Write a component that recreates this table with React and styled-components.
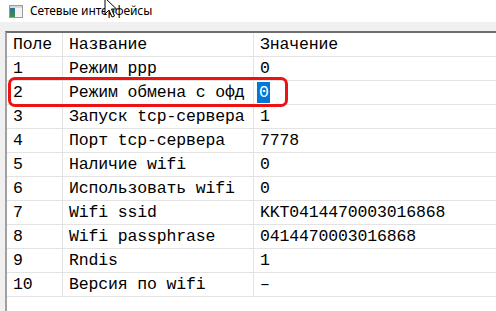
import React from "react";
import styled, { createGlobalStyle } from "styled-components";

const Global = createGlobalStyle`
  html, body { margin: 0; padding: 0; background: #f0f0f0; }
  body { width: 496px; height: 311px; overflow: hidden; }
`;

const Window = styled.div`
  position: relative;
  width: 496px;
  height: 311px;
  background: #f0f0f0;
  display: flex;
  flex-direction: column;
  overflow: hidden;
`;

const TitleBar = styled.div`
  height: 22px;
  background: #ffffff;
  display: flex;
  align-items: center;
  gap: 7px;
  padding-left: 9px;
  font-family: "Noto Sans", "Open Sans", sans-serif;
  font-size: 12px;
  color: #000;
  flex-shrink: 0;
`;

const Caption = styled.span`
  line-height: 22px;
  letter-spacing: -0.1px;
`;

const Body = styled.div`
  flex: 1;
  padding: 9px 0 0 5px;
  display: flex;
`;

const Panel = styled.div`
  flex: 1;
  background: #ffffff;
  border-top: 2px solid #6e6e6e;
  border-left: 2px solid #a0a0a0;
`;

const Grid = styled.div`
  display: grid;
  grid-template-columns: 56px 191px 1fr;
  font-family: "Liberation Mono", "Courier New", monospace;
  font-size: 16.5px;
  color: #000;
`;

const Cell = styled.div`
  height: 23px;
  display: flex;
  align-items: center;
  padding-left: ${(p) => (p.$first ? "6px" : "6px")};
  border-bottom: 1px solid #e3e3e3;
  border-right: ${(p) => (p.$last ? "none" : "1px solid #e3e3e3")};
  white-space: nowrap;
  overflow: hidden;
  letter-spacing: -0.15px;
`;

const Selected = styled.span`
  background: #0078d7;
  color: #ffffff;
  margin-left: -3px;
  padding: 1px 1px 1px 2px;
  line-height: 19px;
`;

const Highlight = styled.div`
  position: absolute;
  left: 8px;
  top: 77px;
  width: 274px;
  height: 24px;
  border: 3px solid #ee1111;
  border-radius: 7px;
  pointer-events: none;
`;

const Pointer = styled.svg`
  position: absolute;
  left: 104px;
  top: -3px;
`;

const rows = [
  ["1", "Режим ppp", "0"],
  ["2", "Режим обмена с офд", "SEL"],
  ["3", "Запуск tcp-сервера", "1"],
  ["4", "Порт tcp-сервера", "7778"],
  ["5", "Наличие wifi", "0"],
  ["6", "Использовать wifi", "0"],
  ["7", "Wifi ssid", "KKT0414470003016868"],
  ["8", "Wifi passphrase", "0414470003016868"],
  ["9", "Rndis", "1"],
  ["10", "Версия по wifi", "–"],
];

function AppIcon() {
  return (
    <svg width="14" height="13" viewBox="0 0 14 13">
      <rect x="0.5" y="0.5" width="13" height="12" fill="#f4f4f4" stroke="#9a9a9a" />
      <rect x="1" y="1" width="12" height="2" fill="#d8d8d8" />
      <defs>
        <linearGradient id="side" x1="0" y1="0" x2="0" y2="1">
          <stop offset="0" stopColor="#2f6f8f" />
          <stop offset="1" stopColor="#3c8f4a" />
        </linearGradient>
      </defs>
      <rect x="1" y="3" width="5" height="9" fill="url(#side)" />
    </svg>
  );
}

export default function App() {
  return (
    <Window>
      <Global />
      <TitleBar>
        <AppIcon />
        <Caption>Сетевые интерфейсы</Caption>
      </TitleBar>
      <Body>
        <Panel>
          <Grid>
            <Cell>Поле</Cell>
            <Cell>Название</Cell>
            <Cell $last>Значение</Cell>
            {rows.map(([n, name, value]) => (
              <React.Fragment key={n}>
                <Cell>{n}</Cell>
                <Cell>{name}</Cell>
                <Cell $last>
                  {value === "SEL" ? <Selected>0</Selected> : value}
                </Cell>
              </React.Fragment>
            ))}
          </Grid>
        </Panel>
      </Body>
      <Highlight />
      <Pointer width="14" height="22" viewBox="0 0 14 22">
        <path
          d="M1 1 L1 17 L5 13 L8 20 L10.5 19 L7.5 12 L12.5 12 Z"
          fill="#ffffff"
          stroke="#000000"
          strokeWidth="1"
          strokeLinejoin="miter"
        />
      </Pointer>
    </Window>
  );
}
